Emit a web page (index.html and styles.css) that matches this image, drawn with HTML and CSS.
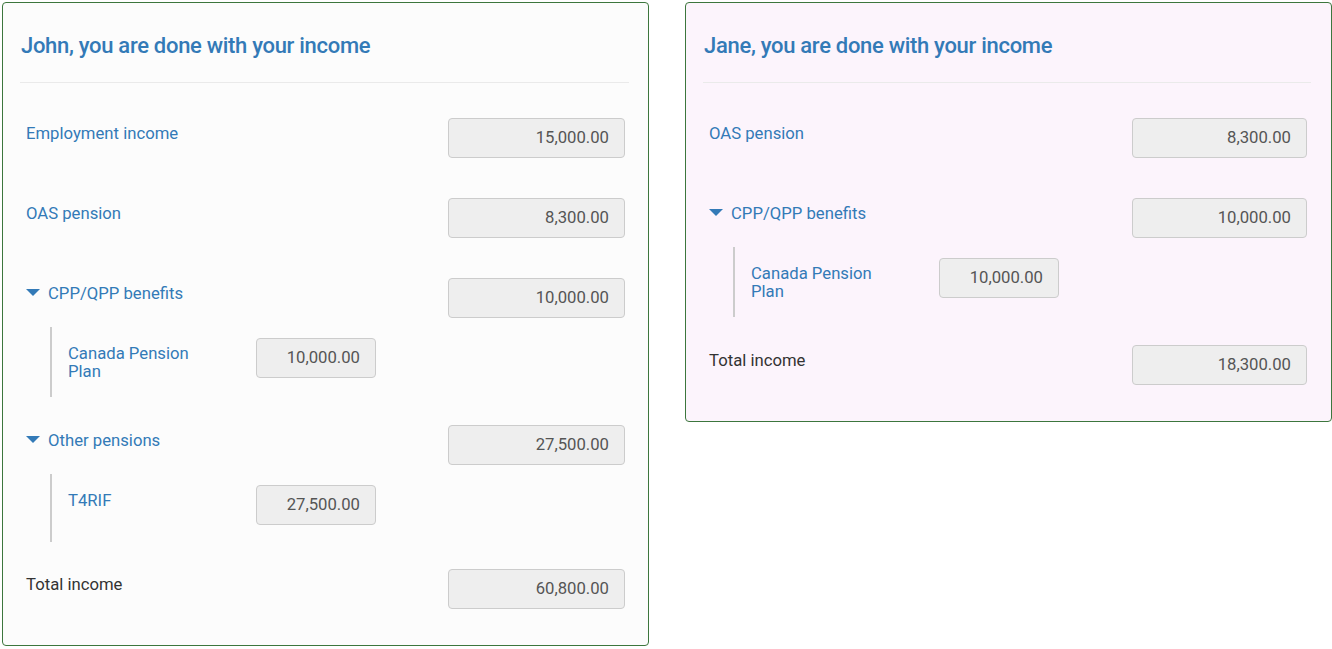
FILE: index.html
```html
<!DOCTYPE html>
<html lang="en">
<head>
<meta charset="utf-8">
<title>Income summary</title>
<link rel="stylesheet" href="styles.css">
</head>
<body>
<div class="page">
  <section class="card card-john">
    <h2 class="card-title">John, you are done with your income</h2>
    <hr class="divider">
    <div class="row">
      <div class="label">Employment income</div>
      <div class="amount">15,000.00</div>
    </div>
    <div class="row">
      <div class="label">OAS pension</div>
      <div class="amount">8,300.00</div>
    </div>
    <div class="row parent">
      <div class="label"><svg class="caret" width="14" height="8" viewBox="0 0 14 8"><polygon points="0,0 14,0 7,7" fill="#337ab7"/></svg>CPP/QPP benefits</div>
      <div class="amount">10,000.00</div>
    </div>
    <div class="nested">
      <div class="nested-label">Canada Pension Plan</div>
      <div class="amount small">10,000.00</div>
    </div>
    <div class="row parent">
      <div class="label"><svg class="caret" width="14" height="8" viewBox="0 0 14 8"><polygon points="0,0 14,0 7,7" fill="#337ab7"/></svg>Other pensions</div>
      <div class="amount">27,500.00</div>
    </div>
    <div class="nested nested-last">
      <div class="nested-label">T4RIF</div>
      <div class="amount small">27,500.00</div>
    </div>
    <div class="row total">
      <div class="label">Total income</div>
      <div class="amount">60,800.00</div>
    </div>
  </section>

  <section class="card card-jane">
    <h2 class="card-title">Jane, you are done with your income</h2>
    <hr class="divider">
    <div class="row">
      <div class="label">OAS pension</div>
      <div class="amount">8,300.00</div>
    </div>
    <div class="row parent">
      <div class="label"><svg class="caret" width="14" height="8" viewBox="0 0 14 8"><polygon points="0,0 14,0 7,7" fill="#337ab7"/></svg>CPP/QPP benefits</div>
      <div class="amount">10,000.00</div>
    </div>
    <div class="nested">
      <div class="nested-label">Canada Pension Plan</div>
      <div class="amount small">10,000.00</div>
    </div>
    <div class="row total">
      <div class="label">Total income</div>
      <div class="amount">18,300.00</div>
    </div>
  </section>
</div>
</body>
</html>
```

FILE: styles.css
```css
html, body {
  margin: 0;
  padding: 0;
  background: #ffffff;
}

body {
  font-family: Roboto, "Liberation Sans", Arial, sans-serif;
  font-size: 16.7px;
  color: #333;
}

.page {
  display: flex;
  align-items: flex-start;
  gap: 36px;
  padding: 2px 0 2px 2px;
}

.card {
  box-sizing: border-box;
  width: 647px;
  flex: none;
  border: 1px solid #3c763d;
  border-radius: 4px;
  padding: 0 19px 36px 17px;
  display: flex;
  flex-direction: column;
}

.card-john {
  background: #fcfcfc;
}

.card-jane {
  background: #fcf4fc;
  padding-right: 20px;
}

.card-title {
  margin: 31px 0 0 1px;
  font-size: 22px;
  font-weight: 500;
  line-height: 1.1;
  color: #337ab7;
  letter-spacing: -0.3px;
}

.divider {
  border: 0;
  border-top: 1px solid #eaeaea;
  margin: 24px 0 35px 0;
  height: 0;
}

.row {
  display: flex;
  align-items: flex-start;
  margin-bottom: 40px;
}

.row.parent {
  margin-bottom: 9px;
}

.row.total {
  margin-bottom: 0;
}

.label {
  flex: 1;
  padding: 7px 0 0 6px;
  line-height: 17.5px;
  color: #337ab7;
}

.total .label {
  color: #333;
}

.caret {
  display: inline-block;
  vertical-align: 2px;
  margin-right: 8px;
}

.amount {
  box-sizing: border-box;
  width: 177px;
  height: 40px;
  margin-right: 4px;
  background: #eeeeee;
  border: 1px solid #cccccc;
  border-radius: 4px;
  text-align: right;
  padding-right: 15px;
  line-height: 38px;
  color: #555;
  font-size: 16.7px;
}

.card-jane .row .amount {
  width: 175px;
}

.amount.small {
  width: 120px;
  margin-right: 0;
}

.nested {
  display: flex;
  align-items: flex-start;
  margin: 0 0 28px 30px;
  border-left: 2px solid #cccccc;
  padding: 11px 0 17px 16px;
}

.nested.nested-last {
  margin-bottom: 27px;
}

.nested-label {
  box-sizing: border-box;
  width: 188px;
  padding: 7px 48px 0 0;
  line-height: 17.5px;
  color: #337ab7;
}
```
